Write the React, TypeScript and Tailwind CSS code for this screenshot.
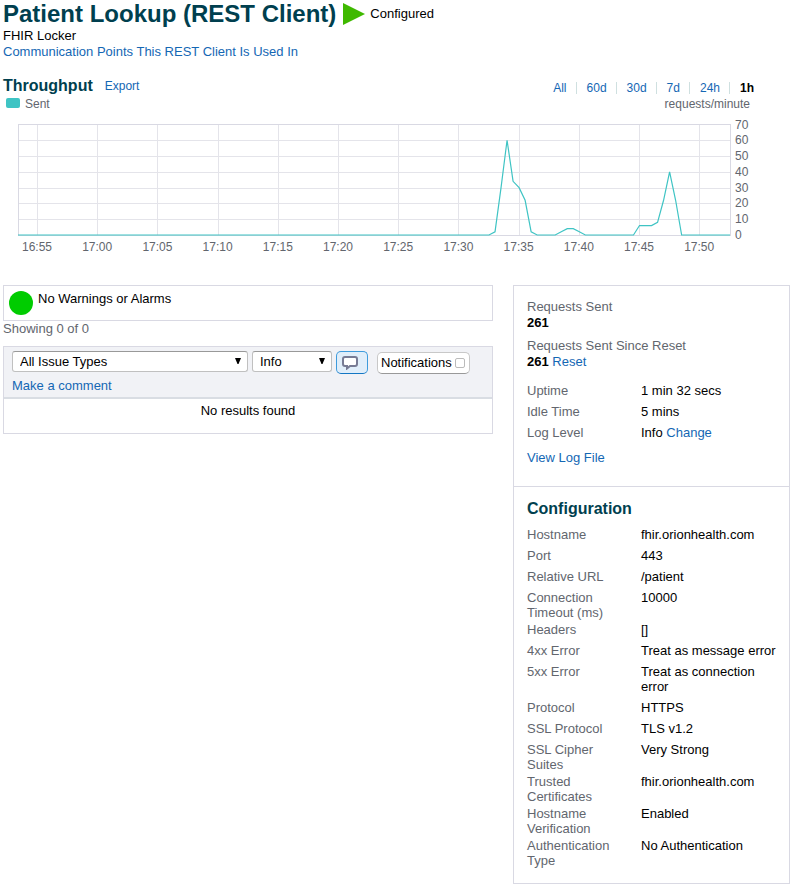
import type { ReactNode } from "react";

const LINK = "text-[#1467b4] hover:underline";

const ranges = ["All", "60d", "30d", "7d", "24h", "1h"];

const status: [string, ReactNode][] = [
  ["Uptime", "1 min 32 secs"],
  ["Idle Time", "5 mins"],
  ["Log Level", <>Info <a href="#change" className={LINK}>Change</a></>],
];

const configuration: [string, ReactNode][] = [
  ["Hostname", "fhir.orionhealth.com"],
  ["Port", "443"],
  ["Relative URL", "/patient"],
  ["Connection Timeout (ms)", "10000"],
  ["Headers", "[]"],
  ["4xx Error", "Treat as message error"],
  ["5xx Error", "Treat as connection error"],
  ["Protocol", "HTTPS"],
  ["SSL Protocol", "TLS v1.2"],
  ["SSL Cipher Suites", "Very Strong"],
  ["Trusted Certificates", "fhir.orionhealth.com"],
  ["Hostname Verification", "Enabled"],
  ["Authentication Type", "No Authentication"],
];

const times = ["16:55", "17:00", "17:05", "17:10", "17:15", "17:20", "17:25", "17:30", "17:35", "17:40", "17:45", "17:50"];

// Half-minute samples, keyed by index counted from 16:55. Missing ones are zero.
const samples: Record<number, number> = {
  76: 2, 77: 30, 78: 60, 79: 34, 80: 30, 81: 22, 82: 2,
  87: 2, 88: 4, 89: 4, 90: 2,
  100: 6, 101: 6, 102: 6, 103: 8, 104: 22, 105: 40, 106: 22,
};

const LEFT = 15;
const RIGHT = 727;
const BASE = 123;
const FIRST_TICK = 34;
const TICK = 60.2;
const timeX = (index: number) => FIRST_TICK + (index * TICK) / 10;
const valueY = (value: number) => BASE - (value * 110.5) / 70;

function ThroughputChart() {
  const points = [`${LEFT},${BASE}`];
  for (let i = -3; i <= 115; i++) points.push(`${timeX(i) + 0.5},${valueY(samples[i] ?? 0)}`);
  points.push(`${RIGHT},${BASE}`);

  return (
    <svg viewBox="0 0 787 145" className="block w-full" role="img" aria-label="Requests sent per minute">
      <g stroke="#e4e4ea" shapeRendering="crispEdges">
        {[10, 20, 30, 40, 50, 60].map((v) => (
          <line key={v} x1={LEFT} x2={RIGHT} y1={Math.round(valueY(v)) + 0.5} y2={Math.round(valueY(v)) + 0.5} />
        ))}
        {times.map((t, i) => (
          <line key={t} x1={Math.round(timeX(i * 10)) + 0.5} x2={Math.round(timeX(i * 10)) + 0.5} y1={13} y2={BASE} />
        ))}
        <rect x={LEFT + 0.5} y={12.5} width={RIGHT - LEFT} height={111} fill="none" stroke="#d9d9e3" />
      </g>
      <polyline points={points.join(" ")} fill="none" stroke="#3fc4c4" strokeWidth="1.2" />
      <g fill="#62666e" fontSize="12">
        {times.map((t, i) => (
          <text key={t} x={timeX(i * 10)} y={139} textAnchor="middle">{t}</text>
        ))}
        {[0, 10, 20, 30, 40, 50, 60, 70].map((v) => (
          <text key={v} x={732} y={Math.round(valueY(v)) + 4}>{v}</text>
        ))}
      </g>
    </svg>
  );
}

function Properties({ rows }: { rows: [string, ReactNode][] }) {
  return (
    <table className="w-full table-fixed border-collapse leading-[15px]">
      <tbody>
        {rows.map(([name, value]) => (
          <tr key={name} className="align-top">
            <th scope="row" className="w-[114px] pr-5 pb-0.5 text-left font-normal text-[#62666e]">{name}</th>
            <td className="pb-1.5">{value}</td>
          </tr>
        ))}
      </tbody>
    </table>
  );
}

function Dropdown({ label, options, className }: { label: string; options: string[]; className: string }) {
  return (
    <div className={`relative ${className}`}>
      <select
        aria-label={label}
        className="block h-[21px] w-full appearance-none rounded-[3px] border border-[#c0c0c0] border-t-[#999] bg-white pr-5 pl-[7px] leading-4"
      >
        {options.map((o) => (
          <option key={o}>{o}</option>
        ))}
      </select>
      <svg viewBox="0 0 6 6" className="pointer-events-none absolute top-[7px] right-[7px] size-1.5" aria-hidden="true">
        <path d="M0 0h6L3.5 6h-1z" />
      </svg>
    </div>
  );
}

export default function App() {
  return (
    <main className="bg-white pr-1 pb-2 pl-[3px] font-['Liberation_Sans',Arial,sans-serif] text-[13px] leading-4 text-black">
      <header>
        <div className="flex h-7 items-center">
          <h1 className="text-2xl leading-7 font-bold text-[#003f4f]">Patient Lookup (REST Client)</h1>
          <svg viewBox="0 0 22 24" className="ml-[7px] h-6 w-[22px]" aria-hidden="true">
            <path d="M0 1v22l22-11z" fill="#3fb900" />
          </svg>
          <span className="ml-[5px]">Configured</span>
        </div>
        <p>FHIR Locker</p>
        <a href="#points" className={`block ${LINK}`}>Communication Points This REST Client Is Used In</a>
      </header>

      <section className="mt-4">
        <div className="flex h-5 items-center justify-between pr-9">
          <div className="flex items-center gap-3">
            <h2 className="text-base leading-5 font-bold text-[#003f4f]">Throughput</h2>
            <a href="#export" className={`text-[12px] ${LINK}`}>Export</a>
          </div>
          <nav aria-label="Time range" className="flex items-center pt-1 text-[12px]">
            {ranges.map((r, i) => (
              <div key={r} className="flex items-center">
                {i > 0 && <span className="mr-2.5 ml-[9px] h-3 w-px bg-[#cfe0e0]" />}
                <a href={`#${r}`} className={r === "1h" ? "font-bold" : LINK}>{r}</a>
              </div>
            ))}
          </nav>
        </div>
        <div className="flex justify-between pr-10 text-[12px] text-[#62666e]">
          <div className="flex items-center gap-[5px]">
            <span className="mb-0.5 ml-[3px] h-2.5 w-3.5 rounded-xs bg-[#3fc4c4]" />
            <span>Sent</span>
          </div>
          <span>requests/minute</span>
        </div>
        <ThroughputChart />
      </section>

      <div className="mt-7 flex items-start gap-5">
        <div className="min-w-0 flex-1">
          <div className="flex gap-[5px] border border-[#d9d9e3] p-[5px]">
            <span className="size-6 rounded-full bg-[#00cc00]" />
            <span>No Warnings or Alarms</span>
          </div>
          <p className="text-[#62666e]">Showing 0 of 0</p>

          <div className="mt-[9px] border border-[#d9d9e3]">
            <div className="border-b-2 border-[#d9dde3] bg-[#f1f2f6] px-2 pt-1 pb-[3px]">
              <div className="flex items-start gap-1">
                <Dropdown label="Issue type" options={["All Issue Types"]} className="w-[236px]" />
                <Dropdown label="Severity" options={["Info"]} className="w-20" />
                <button
                  type="button"
                  aria-label="Comments"
                  className="flex h-[23px] w-8 items-center justify-center rounded-[5px] border border-[#3e9bdc] border-b-[#1377c4] bg-[#e0eefa] pr-1"
                >
                  <svg viewBox="0 0 16 14" className="h-3.5 w-4" fill="white" stroke="#777b94" strokeWidth="2" aria-hidden="true">
                    <path d="M3 1h10q2 0 2 2v5q0 2-2 2H8l-3 2.500V10H3Q1 10 1 8V3Q1 1 3 1z" />
                  </svg>
                </button>
                <label className="mt-px ml-[5px] flex h-[22px] items-center gap-0.5 rounded-[5px] border border-[#c8c8c8] border-b-[#999] bg-white px-[3px]">
                  Notifications
                  <input type="checkbox" className="mx-px size-2.5 appearance-none rounded-xs border border-[#bbb] bg-white checked:bg-[#3e9bdc]" />
                </label>
              </div>
              <a href="#comment" className={`mt-1 block ${LINK}`}>Make a comment</a>
            </div>
            <p className="pt-1 pb-3.5 text-center">No results found</p>
          </div>
        </div>

        <aside className="w-[277px] border border-[#d9d9e3]">
          <section className="px-[13px] pt-[13px] pb-5">
            <p className="text-[#62666e]">Requests Sent</p>
            <p className="font-bold">261</p>
            <p className="mt-[7px] text-[#62666e]">Requests Sent Since Reset</p>
            <p className="mb-[13px]"><b>261</b> <a href="#reset" className={LINK}>Reset</a></p>
            <Properties rows={status} />
            <a href="#log" className={`mt-1 block ${LINK}`}>View Log File</a>
          </section>
          <section className="border-t border-[#d9d9e3] pt-3 pr-3 pb-[13px] pl-[13px]">
            <h2 className="mb-2 text-base leading-5 font-bold text-[#003f4f]">Configuration</h2>
            <Properties rows={configuration} />
          </section>
        </aside>
      </div>
    </main>
  );
}
